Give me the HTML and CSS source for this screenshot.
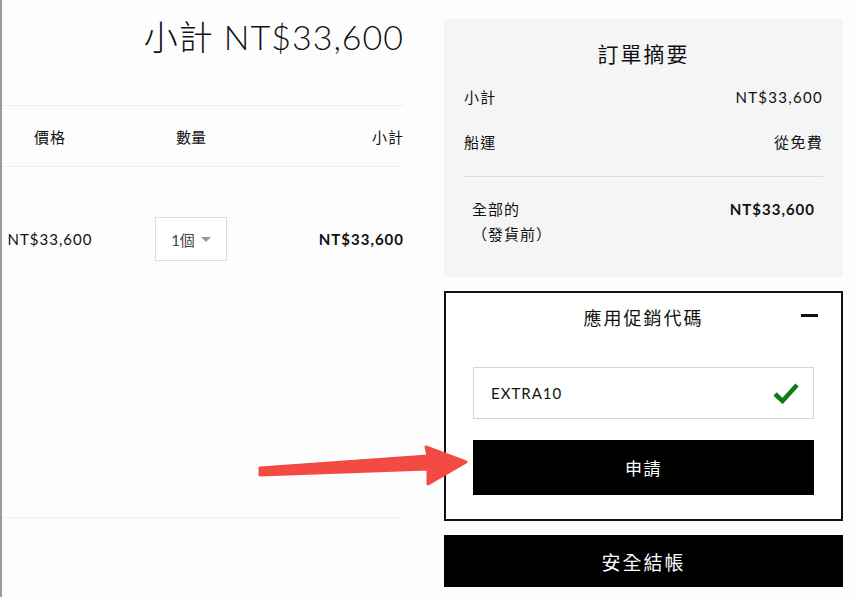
FILE: index.html
```html
<!DOCTYPE html>
<html lang="zh-Hant">
<head>
<meta charset="utf-8">
<title>購物車</title>
<link rel="stylesheet" href="styles.css">
</head>
<body>
<div class="page">
  <main class="cart">
    <h1 class="cart-title">小計 NT$33,600</h1>
    <div class="cart-head">
      <span class="col-price">價格</span>
      <span class="col-qty">數量</span>
      <span class="col-sub">小計</span>
    </div>
    <div class="cart-item">
      <span class="col-price">NT$33,600</span>
      <span class="col-qty"><span class="qty-select">1個<span class="caret"></span></span></span>
      <span class="col-sub strong">NT$33,600</span>
    </div>
  </main>
  <aside class="side">
    <section class="summary">
      <h2 class="summary-title">訂單摘要</h2>
      <div class="sum-row"><span>小計</span><span>NT$33,600</span></div>
      <div class="sum-row"><span>船運</span><span>從免費</span></div>
      <div class="sum-total">
        <div class="total-label"><span>全部的</span><span class="pre">（發貨前）</span></div>
        <span class="strong">NT$33,600</span>
      </div>
    </section>
    <section class="promo">
      <div class="promo-head">
        <span class="promo-title">應用促銷代碼</span>
        <span class="minus"></span>
      </div>
      <div class="promo-input">
        <span>EXTRA10</span>
        <svg class="check" width="26" height="22" viewBox="0 0 26 22"><path d="M2 12 L9.5 19 L24 3" fill="none" stroke="#0b7d12" stroke-width="4.5"/></svg>
      </div>
      <button class="btn apply">申請</button>
    </section>
    <button class="btn checkout">安全結帳</button>
  </aside>
</div>
<svg class="arrow" width="856" height="597" viewBox="0 0 856 597">
  <path d="M260 468 L428 456 L426 447 L466 462 L428 484 L428 469 L260 475 Z" fill="#f34a44" stroke="#f34a44" stroke-width="3" stroke-linejoin="round"/>
</svg>
</body>
</html>
```
FILE: styles.css
```css
html, body {
  margin: 0;
  padding: 0;
  background: #fdfdfd;
}
body {
  font-family: "Lato", "Noto Sans CJK TC", sans-serif;
  color: #111;
  width: 856px;
  height: 597px;
  overflow: hidden;
  position: relative;
  letter-spacing: 1px;
}
.page {
  display: flex;
  align-items: flex-start;
  gap: 41px;
}
.cart {
  width: 403px;
  height: 597px;
  border-left: 2px solid #9a9a9a;
  box-sizing: border-box;
  display: flex;
  flex-direction: column;
}
.cart-title {
  margin: 0;
  padding-top: 15px;
  height: 106px;
  flex: none;
  box-sizing: border-box;
  text-align: right;
  font-size: 34px;
  line-height: 44px;
  font-weight: 300;
  letter-spacing: 1px;
  margin-right: -1px;
  color: #111;
  border-bottom: 1px solid #eeeeee;
}
.cart-head,
.cart-item {
  display: grid;
  grid-template-columns: 96px 186px 1fr;
  align-items: center;
  font-size: 15px;
  flex: none;
}
.cart-head {
  height: 60px;
  border-bottom: 1px solid #eeeeee;
}
.cart-item {
  height: 351px;
  align-content: start;
  padding-top: 50px;
  box-sizing: border-box;
  border-bottom: 1px solid #eeeeee;
}
.col-price { text-align: center; }
.col-qty { text-align: center; letter-spacing: 0; }
.col-sub { text-align: right; margin-right: -1px; }
.strong { font-weight: 700; }
.qty-select {
  display: inline-flex;
  align-items: center;
  justify-content: center;
  gap: 6px;
  width: 72px;
  height: 44px;
  box-sizing: border-box;
  border: 1px solid #dddddd;
  background: #fff;
  color: #444;
  font-size: 15px;
}
.caret {
  width: 0;
  height: 0;
  border-left: 5px solid transparent;
  border-right: 5px solid transparent;
  border-top: 5px solid #999;
}
.side {
  width: 399px;
  display: flex;
  flex-direction: column;
}
.summary {
  margin-top: 19px;
  height: 258px;
  box-sizing: border-box;
  background: #f5f5f5;
  padding: 0 20px;
}
.summary-title {
  margin: 0;
  padding-top: 20px;
  font-size: 21px;
  line-height: 30px;
  font-weight: 400;
  text-align: center;
  letter-spacing: 2px;
}
.sum-row {
  display: flex;
  justify-content: space-between;
  font-size: 15px;
  line-height: 24px;
  margin-top: 16px;
  letter-spacing: 1.3px;
}
.sum-row + .sum-row { margin-top: 21px; }
.sum-total {
  margin-top: 22px;
  border-top: 1px solid #dddddd;
  padding: 20px 8px 0 8px;
  display: flex;
  justify-content: space-between;
  font-size: 15px;
  line-height: 25px;
}
.total-label {
  display: flex;
  flex-direction: column;
}
.promo {
  margin-top: 14px;
  border: 2px solid #111;
  background: #fff;
  padding: 0 27px 24px 27px;
}
.promo-head {
  height: 47px;
  position: relative;
  display: flex;
  align-items: center;
  justify-content: center;
}
.promo-title {
  font-size: 18px;
  letter-spacing: 2px;
}
.minus {
  position: absolute;
  right: -4px;
  top: 21px;
  width: 17px;
  height: 3px;
  background: #111;
}
.promo-input {
  margin-top: 27px;
  height: 52px;
  box-sizing: border-box;
  border: 1px solid #d5d5d5;
  display: flex;
  align-items: center;
  justify-content: space-between;
  padding: 0 14px 0 17px;
  font-size: 15px;
  letter-spacing: 1px;
  color: #111;
}
.check { display: block; }
.btn {
  display: block;
  width: 100%;
  border: 0;
  background: #000;
  color: #fff;
  font-family: "Lato", "Noto Sans CJK TC", sans-serif;
  cursor: pointer;
}
.apply {
  margin-top: 21px;
  height: 55px;
  font-size: 17px;
  letter-spacing: 1.5px;
}
.checkout {
  margin-top: 14px;
  height: 52px;
  font-size: 19px;
  letter-spacing: 2px;
}
.arrow {
  position: absolute;
  left: 0;
  top: 0;
  pointer-events: none;
}
```
